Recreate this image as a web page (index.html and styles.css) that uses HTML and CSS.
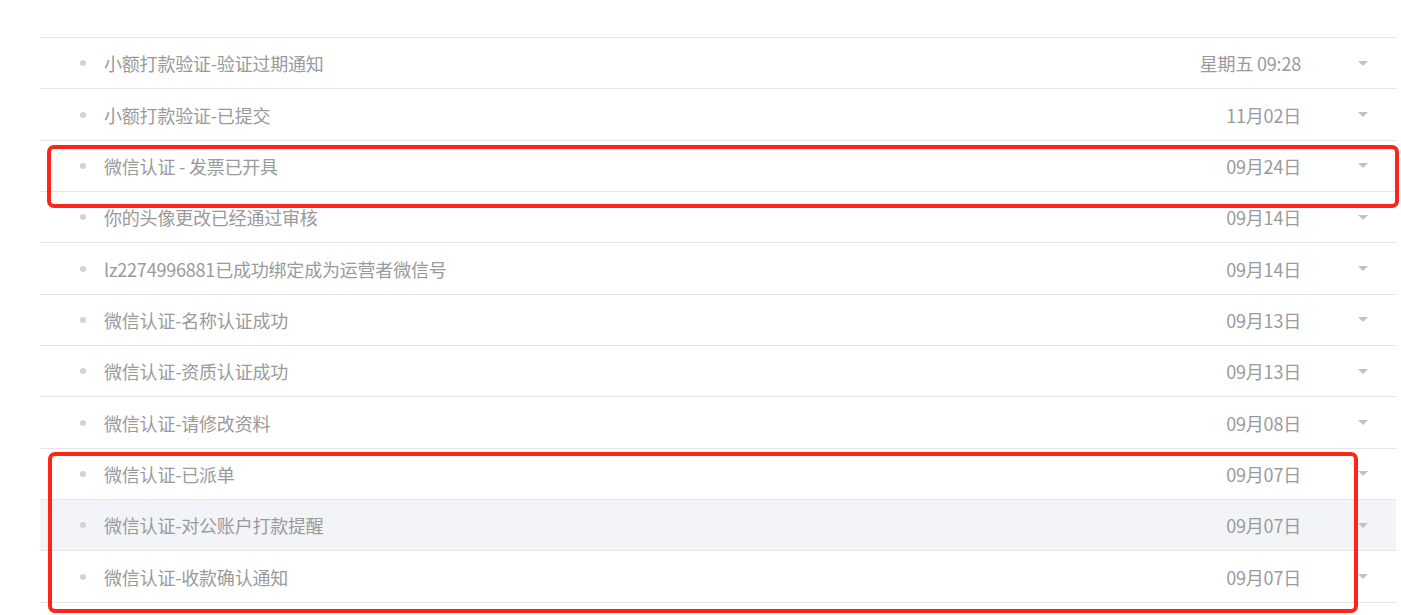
FILE: index.html
```html
<!DOCTYPE html>
<html lang="zh-CN">
<head>
<meta charset="utf-8">
<title>消息列表</title>
<link rel="stylesheet" href="styles.css">
</head>
<body>
<div class="page">
  <ul class="msg-list">
    <li class="msg"><span class="dot"></span><span class="title">小额打款验证-验证过期通知</span><span class="date">星期五 09:28</span><span class="arrow"></span></li>
    <li class="msg"><span class="dot"></span><span class="title">小额打款验证-已提交</span><span class="date">11月02日</span><span class="arrow"></span></li>
    <li class="msg"><span class="dot"></span><span class="title">微信认证 - 发票已开具</span><span class="date">09月24日</span><span class="arrow"></span></li>
    <li class="msg"><span class="dot"></span><span class="title">你的头像更改已经通过审核</span><span class="date">09月14日</span><span class="arrow"></span></li>
    <li class="msg"><span class="dot"></span><span class="title">lz2274996881已成功绑定成为运营者微信号</span><span class="date">09月14日</span><span class="arrow"></span></li>
    <li class="msg"><span class="dot"></span><span class="title">微信认证-名称认证成功</span><span class="date">09月13日</span><span class="arrow"></span></li>
    <li class="msg"><span class="dot"></span><span class="title">微信认证-资质认证成功</span><span class="date">09月13日</span><span class="arrow"></span></li>
    <li class="msg"><span class="dot"></span><span class="title">微信认证-请修改资料</span><span class="date">09月08日</span><span class="arrow"></span></li>
    <li class="msg"><span class="dot"></span><span class="title">微信认证-已派单</span><span class="date">09月07日</span><span class="arrow"></span></li>
    <li class="msg msg-hover"><span class="dot"></span><span class="title">微信认证-对公账户打款提醒</span><span class="date">09月07日</span><span class="arrow"></span></li>
    <li class="msg"><span class="dot"></span><span class="title">微信认证-收款确认通知</span><span class="date">09月07日</span><span class="arrow"></span></li>
  </ul>
  <div class="mark mark-one"></div>
  <div class="mark mark-two"></div>
</div>
</body>
</html>
```
FILE: styles.css
```css
* { box-sizing: border-box; }
html, body { margin: 0; padding: 0; background: #fff; }
body {
  font-family: "Noto Sans CJK SC", "Microsoft YaHei", "Noto Sans", sans-serif;
  color: #9a9a9a;
  overflow: hidden;
}
.page {
  position: relative;
  width: 1401px;
  height: 615px;
  padding-top: 37px;
}
.msg-list {
  list-style: none;
  margin: 0 0 0 40px;
  padding: 0;
  width: 1356px;
  border-top: 1px solid #e4e5e7;
}
.msg {
  display: flex;
  align-items: center;
  height: 51.35px;
  border-bottom: 1px solid #e4e5e7;
  font-size: 18px;
  line-height: 24px;
  letter-spacing: -0.2px;
}
.msg-hover { background: #f3f4f7; }
.dot {
  width: 6px;
  height: 6px;
  border-radius: 50%;
  background: #d3d3d3;
  margin-left: 40px;
  margin-right: 18px;
  flex: none;
}
.title { flex: 1; white-space: nowrap; }
.date { white-space: nowrap; margin-right: 57px; }
.arrow {
  width: 0;
  height: 0;
  border-left: 5px solid transparent;
  border-right: 5px solid transparent;
  border-top: 5px solid #c2c2c2;
  margin-right: 28px;
  flex: none;
}
.mark {
  position: absolute;
  border: 4px solid #ff2419;
  border-radius: 7px;
}
.mark-one { left: 47px; top: 145px; width: 1352px; height: 63px; }
.mark-two { left: 48px; top: 452px; width: 1310px; height: 161px; }
```
